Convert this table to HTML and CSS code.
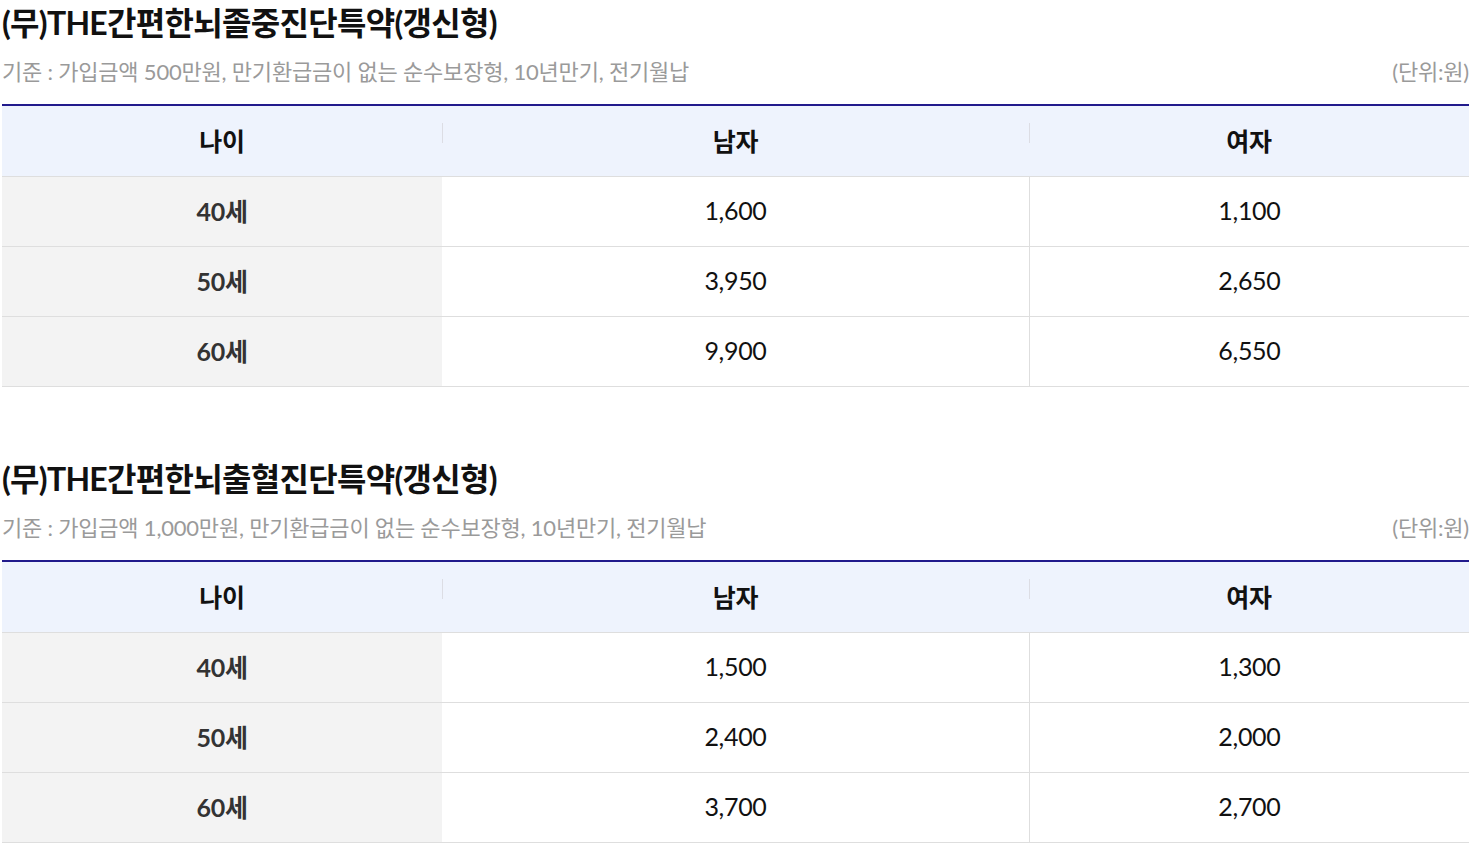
FILE: index.html
```html
<!DOCTYPE html>
<html lang="ko">
<head>
<meta charset="utf-8">
<link rel="stylesheet" href="styles.css">
</head>
<body>
<div class="page">
  <section class="block">
    <h2 class="title">(무)THE간편한뇌졸중진단특약(갱신형)</h2>
    <div class="meta">
      <span class="basis">기준 : 가입금액 500만원, 만기환급금이 없는 순수보장형, 10년만기, 전기월납</span>
      <span class="unit">(단위:원)</span>
    </div>
    <table class="rate">
      <colgroup><col class="c1"><col class="c2"><col class="c3"></colgroup>
      <thead>
        <tr><th>나이</th><th class="div">남자</th><th class="div">여자</th></tr>
      </thead>
      <tbody>
        <tr><th class="age">40세</th><td>1,600</td><td class="sep">1,100</td></tr>
        <tr><th class="age">50세</th><td>3,950</td><td class="sep">2,650</td></tr>
        <tr><th class="age">60세</th><td>9,900</td><td class="sep">6,550</td></tr>
      </tbody>
    </table>
  </section>
  <section class="block">
    <h2 class="title">(무)THE간편한뇌출혈진단특약(갱신형)</h2>
    <div class="meta">
      <span class="basis">기준 : 가입금액 1,000만원, 만기환급금이 없는 순수보장형, 10년만기, 전기월납</span>
      <span class="unit">(단위:원)</span>
    </div>
    <table class="rate">
      <colgroup><col class="c1"><col class="c2"><col class="c3"></colgroup>
      <thead>
        <tr><th>나이</th><th class="div">남자</th><th class="div">여자</th></tr>
      </thead>
      <tbody>
        <tr><th class="age">40세</th><td>1,500</td><td class="sep">1,300</td></tr>
        <tr><th class="age">50세</th><td>2,400</td><td class="sep">2,000</td></tr>
        <tr><th class="age">60세</th><td>3,700</td><td class="sep">2,700</td></tr>
      </tbody>
    </table>
  </section>
</div>
</body>
</html>
```

FILE: styles.css
```css
* { box-sizing: border-box; }
html, body { margin: 0; padding: 0; background: #fff; }
body {
  font-family: Lato, "Noto Sans CJK KR", sans-serif;
  color: #222;
}
.page {
  padding: 0 5px 0 2px;
  display: flex;
  flex-direction: column;
  gap: 69px;
}
.title {
  margin: 0;
  padding-top: 3px;
  font-size: 32px;
  line-height: 40px;
  font-weight: 700;
  color: #111;
  letter-spacing: -0.7px;
}
.meta {
  display: flex;
  justify-content: space-between;
  align-items: center;
  height: 30px;
  margin-top: 12px;
  margin-bottom: 19px;
  font-size: 22px;
  color: #9a9a9a;
  letter-spacing: -0.2px;
}
.rate {
  width: 100%;
  border-collapse: separate;
  border-spacing: 0;
  table-layout: fixed;
  border-top: 2px solid #211a8c;
}
.c1 { width: 30%; }
.c2 { width: 40%; }
.c3 { width: 30%; }
.rate th, .rate td {
  height: 70px;
  padding: 0 0 3px;
  text-align: center;
  vertical-align: middle;
  font-size: 25px;
  letter-spacing: -0.3px;
  border-bottom: 1px solid #dedede;
}
.rate thead th {
  height: 71px;
  background: #eef3fd;
  color: #111;
  font-weight: 700;
  position: relative;
}
.rate thead th.div::before {
  content: "";
  position: absolute;
  left: 0;
  top: 17px;
  width: 1px;
  height: 20px;
  background: #dcdde4;
}
.rate tbody th.age {
  background: #f3f3f3;
  color: #333;
  font-weight: 700;
}
.rate tbody td {
  font-weight: 400;
  color: #111;
}
.rate tbody td.sep { border-left: 1px solid #dedede; }
```
